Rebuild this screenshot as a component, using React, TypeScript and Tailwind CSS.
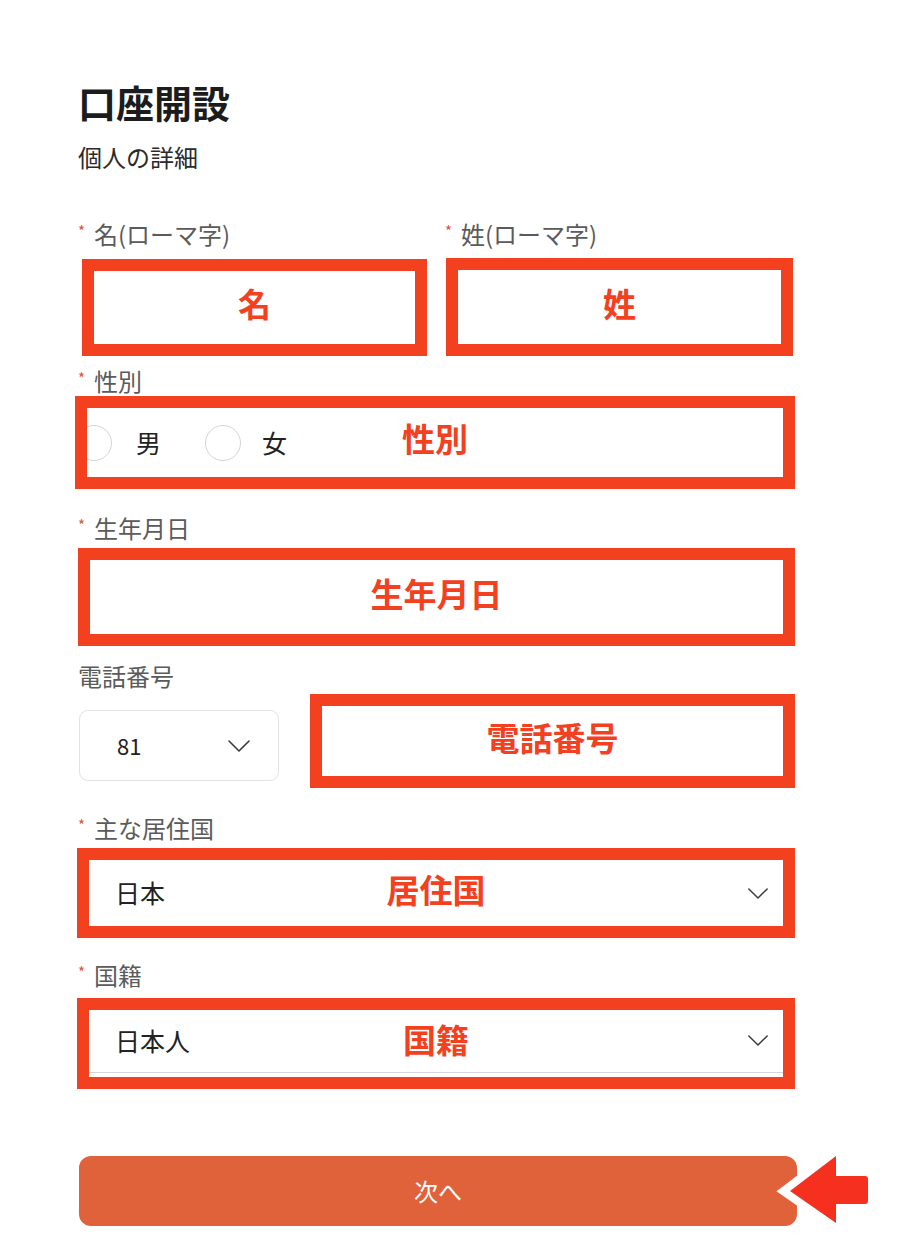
import React from "react";

const RED = "border-[#f3401f]";

function Label({ text, required = true }: { text: string; required?: boolean }) {
  return (
    <div className="flex items-center h-[30px] text-[24px] leading-[30px] text-[#5b5b5b]">
      {required && <span className="text-[#e0533a] text-[15px] w-[16px] -mt-[6px]">*</span>}
      <span>{text}</span>
    </div>
  );
}

function Chevron({ className }: { className?: string }) {
  return (
    <svg viewBox="0 0 24 14" className={className} fill="none" stroke="#3a3a3a" strokeWidth="1.6" strokeLinecap="round" strokeLinejoin="round">
      <path d="M2 2l10 10 10-10" />
    </svg>
  );
}

function Mark({ text }: { text: string }) {
  return (
    <div className="absolute inset-0 flex items-center justify-center pb-[8px] pointer-events-none">
      <span className="text-[33px] font-bold text-[#f3401f] leading-none">{text}</span>
    </div>
  );
}

export default function App() {
  return (
    <div
      className="w-[908px] min-h-[1256px] bg-white pl-[78px] pt-[79px]"
      style={{ fontFamily: '"Noto Sans CJK JP", "Noto Sans", sans-serif' }}
    >
      <h1 className="text-[38px] leading-[46px] font-bold text-[#1c1c1c]">口座開設</h1>
      <p className="mt-[16px] text-[24px] leading-[32px] text-[#2a2a2a]">個人の詳細</p>

      {/* 名 / 姓 */}
      <div className="mt-[46px] flex">
        <div className="w-[367px]">
          <Label text="名(ローマ字)" />
        </div>
        <Label text="姓(ローマ字)" />
      </div>
      <div className="mt-[9px] flex items-start">
        <div className={`relative ml-[4px] mt-[1px] w-[345px] h-[97px] border-[12px] ${RED}`}>
          <Mark text="名" />
        </div>
        <div className={`relative ml-[19px] w-[347px] h-[98px] border-[12px] ${RED}`}>
          <Mark text="姓" />
        </div>
      </div>

      {/* 性別 */}
      <div className="mt-[10px]">
        <Label text="性別" />
      </div>
      <div className={`relative -ml-[3px] w-[720px] h-[93px] border-[12px] ${RED} overflow-hidden flex items-center`}>
        <div className="-ml-[11px] flex items-center text-[25px] text-[#222]">
          <span className="w-[36px] h-[36px] rounded-full border border-[#d4d4d4] bg-white" />
          <span className="ml-[24px]">男</span>
          <span className="ml-[44px] w-[36px] h-[36px] rounded-full border border-[#d4d4d4] bg-white" />
          <span className="ml-[21px]">女</span>
        </div>
        <Mark text="性別" />
      </div>

      {/* 生年月日 */}
      <div className="mt-[24px]">
        <Label text="生年月日" />
      </div>
      <div className={`relative mt-[5px] w-[717px] h-[98px] border-[12px] ${RED}`}>
        <Mark text="生年月日" />
      </div>

      {/* 電話番号 */}
      <div className="mt-[15px]">
        <Label text="電話番号" required={false} />
      </div>
      <div className="mt-[3px] flex items-start">
        <div className="ml-[1px] mt-[16px] w-[200px] h-[71px] rounded-[9px] border border-[#e2e2e2] flex items-center justify-between pl-[37px] pr-[27px]">
          <span className="text-[22px] text-[#222]">81</span>
          <Chevron className="w-[24px] h-[14px]" />
        </div>
        <div className={`relative ml-[31px] w-[485px] h-[94px] border-[12px] ${RED}`}>
          <Mark text="電話番号" />
        </div>
      </div>

      {/* 主な居住国 */}
      <div className="mt-[25px]">
        <Label text="主な居住国" />
      </div>
      <div className={`relative mt-[5px] -ml-[1px] w-[718px] h-[90px] border-[12px] ${RED} flex items-center justify-between pl-[26px] pr-[14px]`}>
        <span className="text-[25px] text-[#222]">日本</span>
        <Chevron className="w-[22px] h-[13px]" />
        <Mark text="居住国" />
      </div>

      {/* 国籍 */}
      <div className="mt-[22px]">
        <Label text="国籍" />
      </div>
      <div className={`relative mt-[8px] -ml-[1px] w-[718px] h-[91px] border-[12px] ${RED} flex items-center justify-between pl-[26px] pr-[14px]`}>
        <span className="text-[25px] text-[#222] -mt-[6px]">日本人</span>
        <Chevron className="w-[22px] h-[13px] -mt-[6px]" />
        <div className="absolute left-0 right-0 bottom-[4px] h-px bg-[#d6d6d6]" />
        <Mark text="国籍" />
      </div>

      {/* 次へ */}
      <div className="relative mt-[67px] ml-[1px] w-[718px]">
        <button className="w-full h-[70px] rounded-[12px] bg-[#e0623a] text-white text-[24px]">
          次へ
        </button>
        <svg
          className="absolute left-[691px] top-[-15px]"
          width="110"
          height="100"
          viewBox="0 0 110 100"
        >
          <path
            d="M20 50 L66 15 L66 35 L95 35 Q98 35 98 38 L98 60 Q98 63 95 63 L66 63 L66 82 Z"
            fill="#f5301f"
            stroke="#fff"
            strokeWidth="16"
            strokeLinejoin="miter"
            paintOrder="stroke"
          />
        </svg>
      </div>
    </div>
  );
}
